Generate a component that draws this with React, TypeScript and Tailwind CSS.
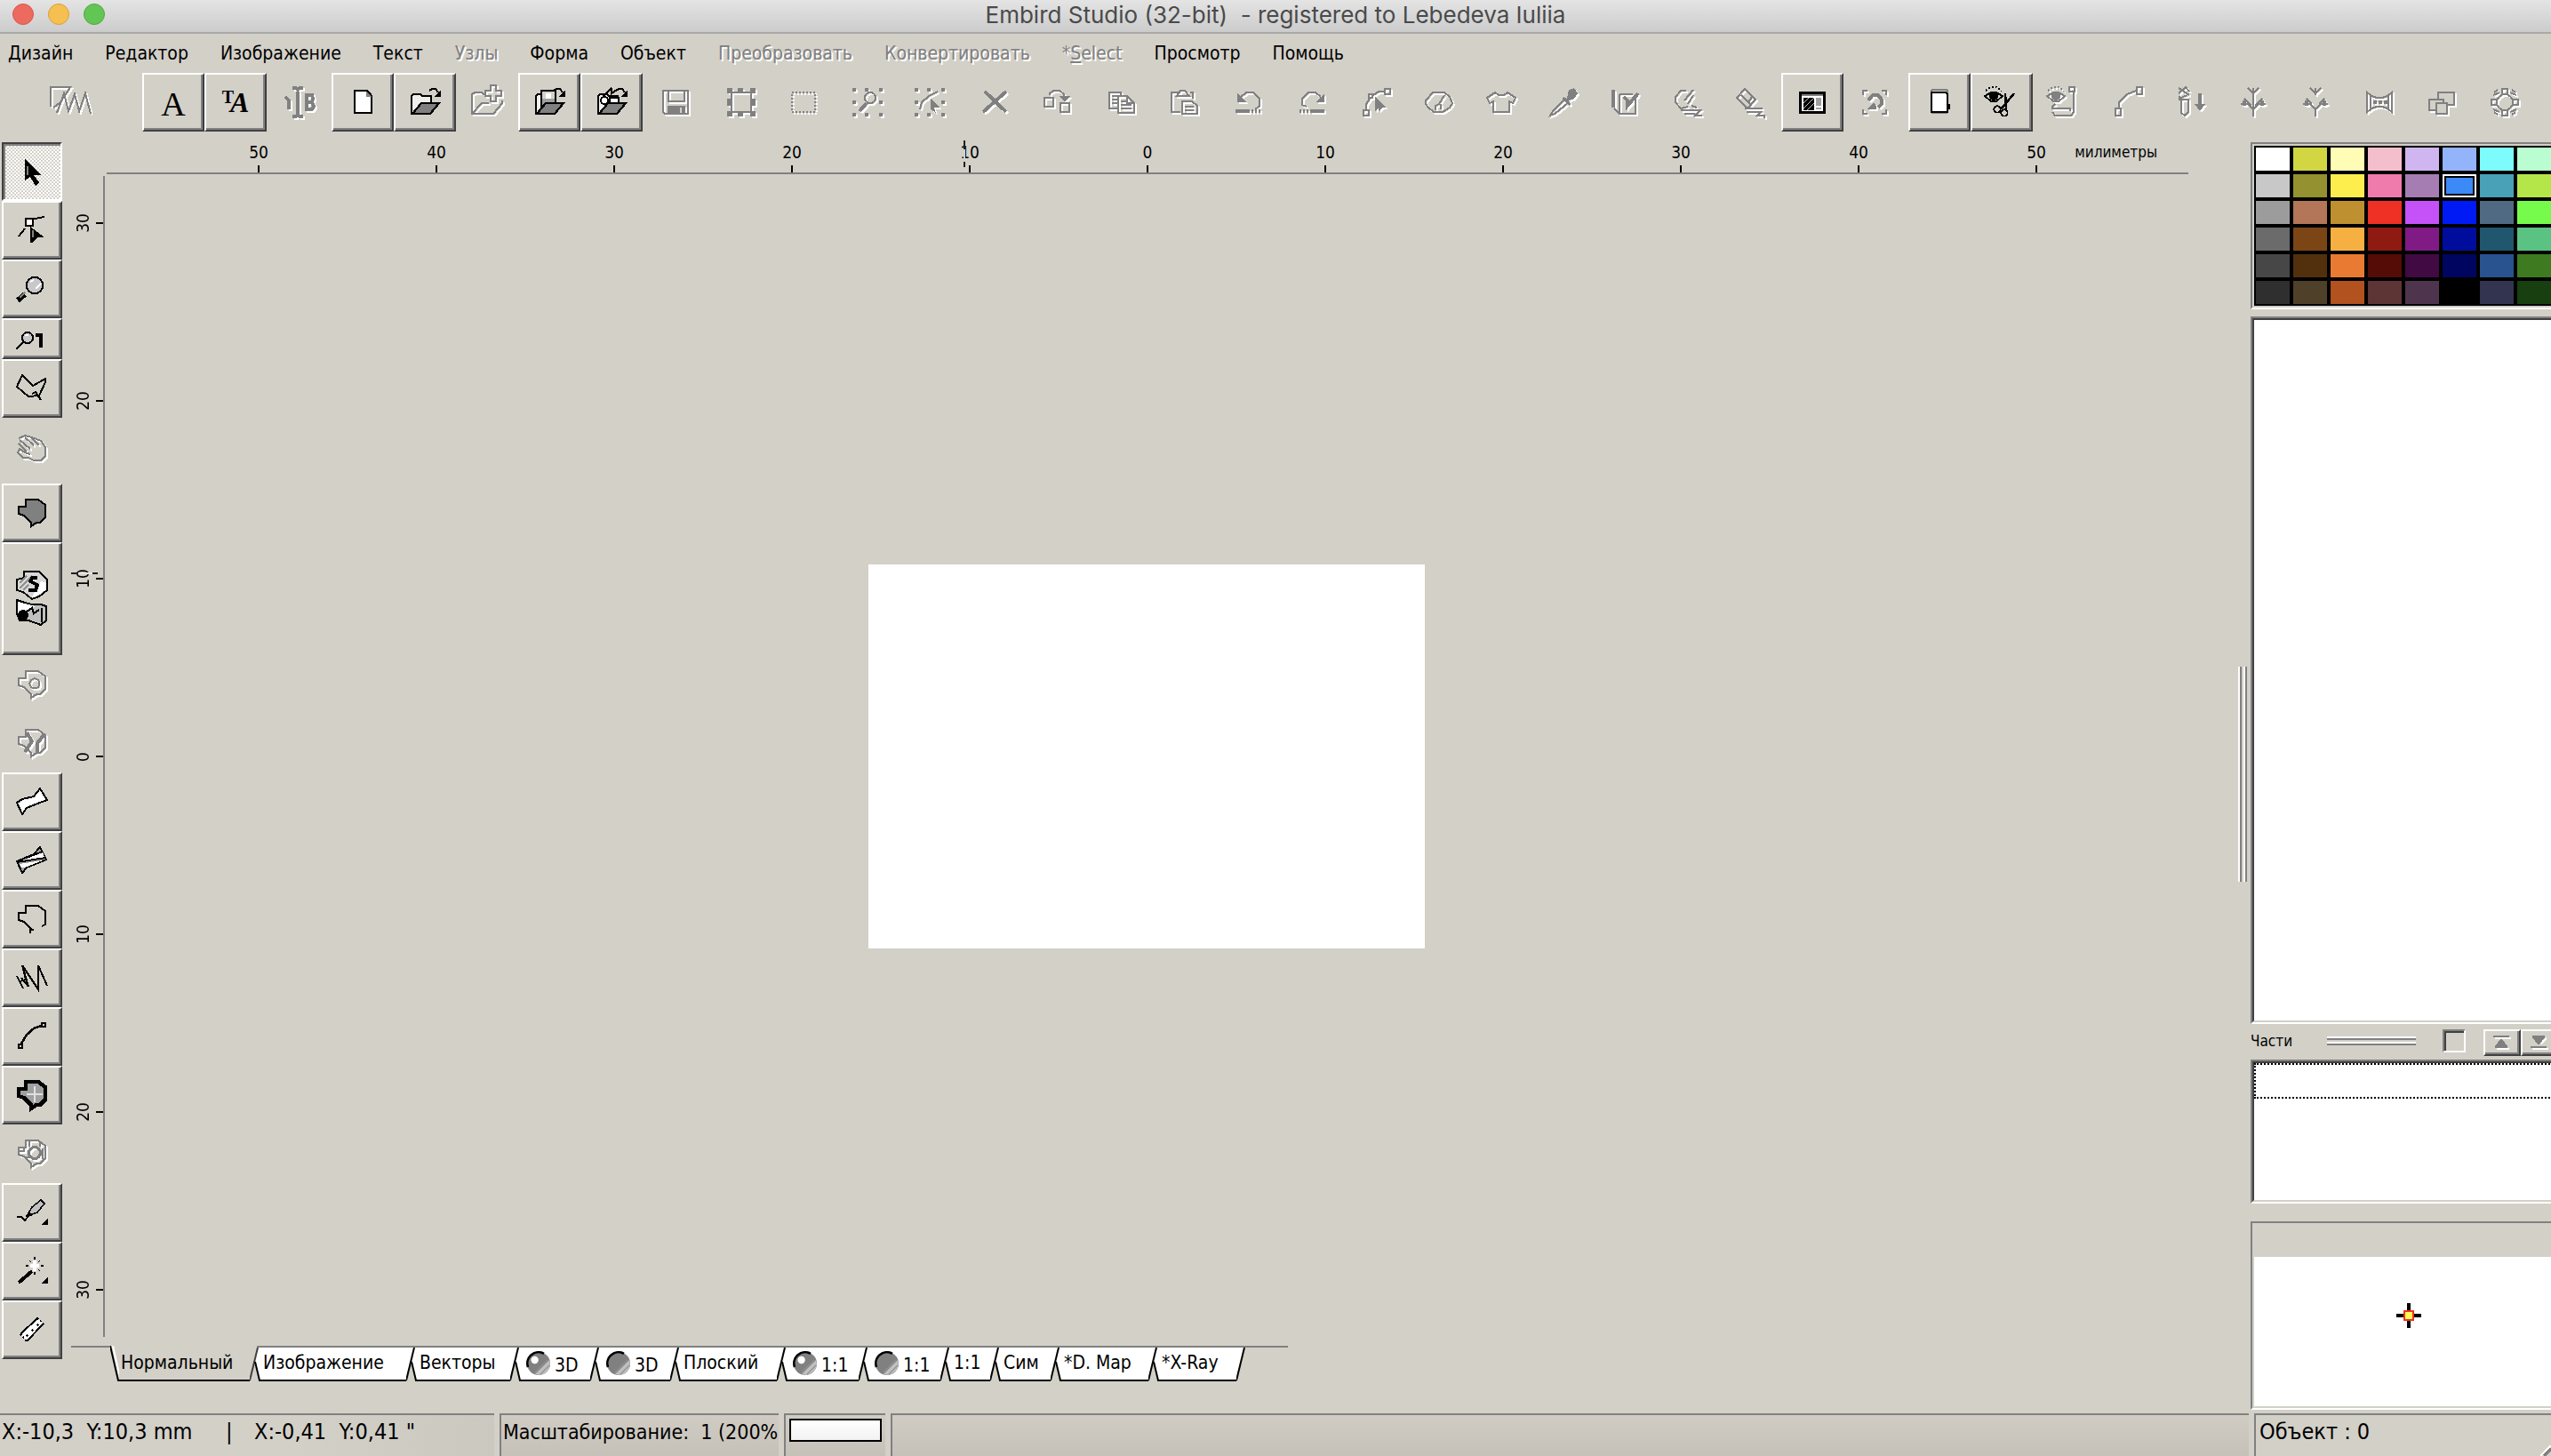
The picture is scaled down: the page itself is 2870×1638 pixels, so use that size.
import type { ReactNode } from 'react'

const RAISED =
  'border-2 border-t-white border-l-white border-b-[#404040] border-r-[#404040] shadow-[inset_-2px_-2px_0_#808080]'
const PRESSED =
  'border-2 border-t-[#404040] border-l-[#404040] border-b-white border-r-white shadow-[inset_2px_2px_0_#808080] bg-[repeating-conic-gradient(#ffffff_0_25%,#d3d0c8_0_50%)] bg-size-[4px_4px]'

const MENU = [
  { label: 'Дизайн' },
  { label: 'Редактор' },
  { label: 'Изображение' },
  { label: 'Текст' },
  { label: 'Узлы', off: true },
  { label: 'Форма' },
  { label: 'Объект' },
  { label: 'Преобразовать', off: true },
  { label: 'Конвертировать', off: true },
  { label: '*Select', off: true, mnemonic: true },
  { label: 'Просмотр' },
  { label: 'Помощь' },
]

const BLOB = 'M-3.5-7.5H3.5L7.5-4.5V2.5L4.5 5.5H2.5L-.5 7.5V5.5L-4.5 1.5L-7.5 .5V-3.5H-3.5Z'

const dots = (
  <path
    fill="currentColor"
    stroke="none"
    d="M-9-8h2v2h-2zM-2-8h2v2h-2zM6-8h2v2h-2zM-9-1h2v2h-2zM6-1h2v2h-2zM-9 6h2v2h-2zM-2 6h2v2h-2zM6 6h2v2h-2z"
  />
)

const folderBack = <path fill="#f0efec" strokeWidth="1.3" d="M-7.5 6.5V-3.5L-6.5-4.5H-2.5L-1.5-3.5H3.5V0" />

const folderFront = (
  <>
    <path fill="#808080" strokeWidth="1.2" d="M-7 6.5L-2 .5H8L3 6.5Z" />
    <path d="M2.5-6.5L4-7.5H6L7.5-5.5" />
    <path fill="currentColor" stroke="none" d="M9-7V-3H5Z" />
  </>
)

const eye = (
  <>
    <path d="M-9.5-3.5L-6-5.5H-3L.5-3.5L-3-.5H-6Z" />
    <circle cx="-4.5" cy="-3.5" r="2.6" fill="currentColor" stroke="none" />
    <path strokeDasharray="1 1" d="M-9-6.5L-6.5-8.5H-3L0-6.5" />
  </>
)

const ICONS: Record<string, ReactNode> = {
  hatch: <path d="M-11.5 2.5V-8.5H-.5L-6 0L-10 3M-8 6L-4-5L-1.5 5L2-4.5L4.5 5L8-5L11 6.5" />,
  caret: (
    <>
      <path strokeWidth="2" d="M0-6V7M-3-8H-1L0-7L1-8H3M-3 8H-1L0 7L1 8H3" />
      <path strokeWidth="2" d="M-7-3L-5-1V4M5-4V4H8L9 2.5L8 0H5H8L8.5-2L8-4Z" />
    </>
  ),
  newFile: (
    <>
      <path fill="#fff" strokeWidth="1.3" d="M-4.5-6.5H2.5L5-3.5V6H-4.5Z" />
      <path fill="#808080" stroke="none" d="M2-6V-3H5Z" />
    </>
  ),
  open: (
    <>
      {folderBack}
      {folderFront}
    </>
  ),
  addFile: (
    <>
      <path d="M-1-4.5H-2L-3-5.5H-7L-8.5-4.5V6.5H3.5L8.5 .5V-1M-8.5 6.5L-3 .5H1" />
      <path d="M2-9.5H5V-6.5H8V-3.5H5V-.5H2V-3.5H-1V-6.5H2Z" />
    </>
  ),
  openImage: (
    <>
      {folderBack}
      <path fill="#d3d0c8" d="M-4.5-6.5H3.5V2.5H-4.5Z" />
      <path fill="#a0a0a0" stroke="none" d="M-4-2H3V2H-4Z" />
      <path fill="#fff" stroke="none" d="M-2-5H1V-2H-2Z" />
      {folderFront}
    </>
  ),
  openVector: (
    <>
      {folderBack}
      <path fill="#fff" d="M-1-2.5H4V.5H-1Z" />
      <circle cx="-4" cy="-1" r="2" fill="#fff" />
      <path d="M-5-3L0-8M0-8V-5L3-7" />
      {folderFront}
    </>
  ),
  save: (
    <>
      <path d="M-7.5-6.5H6.5V6.5H-6.5L-7.5 5.5ZM-4.5-6V-.5H4.5V-6" />
      <path fill="currentColor" stroke="none" d="M-5 2H5V7H-5Z" />
      <path stroke="#d3d0c8" d="M2.5 3V6" />
    </>
  ),
  frame: (
    <>
      <path d="M-5.5-5.5H5.5V5.5H-5.5Z" />
      <path
        fill="currentColor"
        stroke="none"
        d="M-8-8h3v3h-3zM-2-8h3v2h-3zM5-8h3v3H5zM-8-2h2v4h-2zM6-2h2v4H6zM-8 5h3v3h-3zM-2 6h3v2h-3zM5 5h3v3H5z"
      />
    </>
  ),
  marquee: <path strokeDasharray="1 1" d="M-6.5-5.5H6.5V5.5H-6.5Z" />,
  findSel: (
    <>
      {dots}
      <circle cx="1" cy="-2.5" r="3" />
      <path strokeWidth="2" d="M-1 .5L-5 5" />
    </>
  ),
  nodeSel: (
    <>
      {dots}
      <path d="M-6 4L-5 0L-1-3.5L4-6" />
      <path fill="currentColor" stroke="none" d="M0-2L5 3H2L3 6L0 4Z" />
    </>
  ),
  remove: <path strokeWidth="2" d="M-6-6L6 5.5M6-6L-7 5.5" />,
  duplicate: (
    <>
      <path d="M-7.5-2.5H-2.5V2.5H-7.5ZM1.5 .5H6.5V5.5H1.5ZM-4.5-4V-5L-2.5-6.5H1L3.5-4.5V-2" />
      <path fill="currentColor" stroke="none" d="M1-3.5H7L4 0Z" />
    </>
  ),
  copy: <path d="M-1-4V-5.5H-7.5V3.5H-3M-6-3.5H-3M-6-1.5H-3M-6 .5H-3M-2.5-3.5H2.5L6.5 .5V6H-2.5ZM-1-.5H2M-1 1.5H5M-1 3.5H5M2.5-3V.5H6" />,
  paste: <path d="M-3-5.5H-7.5V5.5H-2.5M3-5.5H4.5V-2M-4.5-3.5L-2.5-6.5H0L2.5-3.5ZM-1.5-.5H4L7 2V6.5H-1.5ZM0 2.5H5M0 4.5H5" />,
  undo: (
    <>
      <path d="M-5-3L-2-5.5H2L5.5-2V2L3 4" />
      <path fill="currentColor" stroke="none" d="M-7-5V0H-2ZM-8 4H0V6H-8ZM1 4h1v2H1zM3 4h1v2H3zM5 4h1v2H5z" />
    </>
  ),
  redo: (
    <>
      <path d="M5-3L2-5.5H-2L-5.5-2V1.5L-3 2.5" />
      <path fill="currentColor" stroke="none" d="M7-5V0H2ZM7 4H-1V6H7ZM-3 4h1v2h-1zM-5 4h1v2h-1zM-7 4h1v2h-1z" />
    </>
  ),
  nodeEdit: (
    <>
      <path d="M-7.5 4.5h3v3h-3zM4.5-7.5h3v3h-3zM-4.5-4.5h2v2h-2zM-6 4V1L-4-2M-2-4L1-6H4" />
      <path fill="currentColor" stroke="none" d="M-1-3L5 3H3L1 5V3L-1 5Z" />
    </>
  ),
  gauge: <path d="M-3.5-5.5L-7.5-1V1L-6 3L-3 5.5H2L6 3L7.5 .5L6-3L3-5.5ZM-2 4.5V2L0 1L3-4M1 4V1" />,
  shirt: <path d="M-3.5-5.5L-8-2.5L-6.5 .5L-4.5-.5V5.5H4.5V-.5L6.5 .5L8-2.5L3.5-5.5L1.5-4H-1.5Z" />,
  dropper: (
    <>
      <path d="M1-2L-6 5L-7.5 7.5L-5 6.5L3 0" />
      <path fill="currentColor" stroke="none" d="M3-7L6-8L8-5L6-2L3-1L4 1L3 2L-1-2L0-3L2-2Z" />
    </>
  ),
  notebook: (
    <>
      <path d="M-3.5-4.5H4M5.5-2V6.5H-3.5L-6.5 3.5M-3.5-4.5V6.5" />
      <path strokeWidth="2" d="M-7-7V3M7-5L1 2V-1L-1-3" />
    </>
  ),
  brushStack: <path d="M-1-6.5H-4L-7-3V0L-4 3.5L0 2.5M3-7L-2-1M3-4L0 1M-4 4.5H7L4 7.5H8M-2 6.5H4M2 2L5 3" />,
  eraserStack: <path d="M-3-7.5L-7.5-2.5L-1.5 3.5L3-1.5ZM-5-4L1 2M-1 0L1-3M-3 3.5H7M-2 5.5H6L4 7.5H8V9" />,
  preview: (
    <>
      <path fill="#fff" strokeWidth="1.4" d="M-6.8-5.3H6.8V5.8H-6.8Z" />
      <path fill="#808080" stroke="none" d="M-6-4.5H6V-3.5H-6Z" />
      <path fill="#a0a0a0" stroke="none" d="M2-2.5H5V2H2ZM2 3H5V4H2Z" />
      <path fill="currentColor" stroke="none" d="M-5-2.5H1V4.5H-5Z" />
      <path stroke="#c0c0c0" strokeWidth=".7" d="M-5 .5L-2-2.5M-5 3.5L1-2.5M-3 4.5L1 .5" />
    </>
  ),
  fit: (
    <>
      <path d="M-6.5-4V-6.5H-4M4-6.5H6.5V-4M6.5 4V6.5H4M-4 6.5H-6.5V4" />
      <path strokeWidth="2" d="M-3.5-1L-1-4H2L4-1.5V1L2 3M0 1L-2 3H1" />
    </>
  ),
  hoop: (
    <>
      <rect x="-4.5" y="-7" width="9" height="13" rx="1" stroke="#808080" />
      <path fill="#fff" strokeWidth="1.4" d="M-4.5-5.5H3.5L4.5-4.5V5.5H-4.5Z" />
      <path d="M5.5 1V4" />
    </>
  ),
  eyeCut: (
    <>
      {eye}
      <path strokeWidth="1.3" d="M7-5L-.5 4M2-5L2.5 4" />
      <circle cx="-2.5" cy="4" r="1.8" />
      <circle cx="1.5" cy="6" r="1.8" />
    </>
  ),
  eyeHand: (
    <>
      {eye}
      <path d="M3-8.5H6V-6H3ZM5.5-6V5.5L4 7.5H-5L-6.5 5.5M-7 3.5H3.5V5M-5 1L-7 3" />
    </>
  ),
  curve: <path d="M-7.5 3.5h3v4h-3zM4.5-8.5h3v4h-3zM-5.5 3V0L-1-4.5L4-6.5" />,
  lower: (
    <>
      <path d="M-7-8L-1-4M-7-5L-3-8.5L-1-6M-7-2L-2-4M-5.5-1.5V6L-3.5 7.5L-1.5 5.5V-2M-6.5-3.5V-1.5H-1" />
      <path fill="currentColor" stroke="none" d="M4-5H6V1H8L5 5L2 1H4Z" />
    </>
  ),
  leaf: (
    <>
      <path d="M0-8V8M-3-8L0-5L3-8M-7 1H-3L0 4L3 1H7M-5-2L-1 2M5-2L1 2" />
      <path strokeWidth="2" d="M-5-1V2M5-1V2" />
    </>
  ),
  leafOpen: (
    <>
      <path d="M0-8V-4M0 4V8M-3-8L0-5L3-8M-7 1H-3L0 4L3 1H7M-5-2L-2 1M5-2L2 1" />
      <path strokeWidth="2" d="M-5-1V2M5-1V2" />
    </>
  ),
  bow: (
    <>
      <path d="M-7.5-5.5L-5.5-4V4L-7.5 5.5ZM6.5-5.5L4.5-4V4L6.5 5.5ZM-5-3.5L-2-2.5H1L4-3.5M-5 3.5L-2 2.5H1L4 3.5" />
      <path strokeWidth="2" strokeDasharray="2 1" d="M-4 0H4" />
    </>
  ),
  stack: (
    <>
      <path fill="#d3d0c8" d="M-2.5-5.5H6.5V1.5H-2.5Z" />
      <path fill="#d3d0c8" d="M-7.5-1.5H.5V4.5H-7.5Z" />
      <path fill="#d3d0c8" d="M-3.5 .5H2.5V6.5H-3.5Z" />
    </>
  ),
  wreath: (
    <>
      <circle r="4.5" />
      <path d="M-1.5-7.5h3v3h-3zM-1.5 4.5h3v3h-3zM-7.5-1.5h3v3h-3zM4.5-1.5h3v3h-3zM-6-5.5L-4-7M-6.5-4L-3-5.5M6-5.5L4-7M6.5-4L3-5.5M-6 5.5L-4 7M-6.5 4L-3 5.5M6 5.5L4 7M6.5 4L3 5.5" />
    </>
  ),
  pointer: (
    <>
      <path fill="currentColor" stroke="none" d="M-4-7L5 2H1L4 6L2 8L-1 3L-4 5Z" />
      <path stroke="#808080" d="M-2.5-3V2" />
    </>
  ),
  node: (
    <>
      <path d="M-7.5 3.5L-4-1M-4-5.5L7-7.5" />
      <path fill="#fff" d="M-3.5-6.5h4v4h-4z" />
      <path fill="currentColor" stroke="none" d="M-1-2L7 4H3L0 7H-1Z" />
      <path stroke="#808080" d="M.5 0V4" />
    </>
  ),
  zoom: (
    <>
      <path strokeWidth="3" d="M-4 3L-8 6.5" />
      <path stroke="#808080" d="M-4 2L-7 5" />
      <circle cx="1.5" cy="-2" r="4.6" fill="#c8c8c8" />
      <path stroke="#fff" d="M-1-4L1-5M2 0L5-3" />
    </>
  ),
  zoomOne: (
    <>
      <path strokeWidth="1.3" d="M-5 2L-9 6" />
      <circle cx="-2.5" cy="-.5" r="3" fill="#c8c8c8" />
      <path stroke="#fff" d="M-4-2H-2" />
      <path fill="currentColor" stroke="none" d="M2-3H6V5H4V-1H2Z" />
    </>
  ),
  lasso: <path d="M-5.5-7.5L-8.5-1L-2 4.5L4 4L7.5-3.5V-5.5L.5-1.5ZM0 3L2 2L5 6.5" />,
  hand: <path d="M-7.5-7L-4-8.5L0-7.5L5-5.5L7.5-2V3L5 5.5H1L-2 4H-5L-8 1L-7-1L-4 1L-1 2M-4-7.5L1-3M-7-6L-1-1M-7.5-4L-3 .5M0-7L4-3" />,
  fill: <path fill="#808080" d={BLOB} />,
  hole: (
    <>
      <path d={BLOB} />
      <circle cx="1.5" cy="-.5" r="2.8" />
    </>
  ),
  split: (
    <>
      <path d={BLOB} />
      <path strokeWidth="2" d="M-3-6L0-1L-4 5M7-5L3 0V6" />
    </>
  ),
  column: <path fill="#fff" d="M-8.5 .5L-5.5-1.5L1-3L4.5-7.5L8.5-1L3 1L-3 3.5L-5.5 7Z" />,
  columns: (
    <>
      <path fill="#a0a0a0" d="M-8.5 .5L1-3.5L4.5-7.5L8-.5L-3 4L-5.5 7Z" />
      <path fill="#fff" stroke="none" d="M-7 0L6-4.5L7-2L-1 0ZM-7 2L6 0L-4 4H-6Z" />
      <path d="M-8.5 1L7.5-1.5M-8.5 .5L6-5" />
    </>
  ),
  outline: <path d="M-1 8V6H1M0 6L-4.5 1.5L-7.5 .5V-3.5H-3.5V-7.5H3.5L7.5-4.5V3L5.5 4" />,
  zigzag: <path d="M-8.5-1L-5 6L-7 2L-3.5 1L-5.5-7L3.5 6.5V-7L8.5 4.5M-5.5-7L-2 5L-6 0" />,
  arc: <path strokeWidth="1.3" d="M-7.5 4.5h2v2h-2zM5.5-7.5h2v2h-2zM-6 4L-3-1L1-4.5L5-6" />,
  fillThick: (
    <>
      <path fill="#a0a0a0" strokeWidth="2.2" d={BLOB} />
      <path stroke="#e0e0e0" d="M-3-.5H6M1.5-5V4" />
    </>
  ),
  ringHole: (
    <>
      <path d={BLOB} />
      <circle cx="1.5" cy="-.5" r="3.2" strokeWidth="1.6" />
      <path d="M-4.5-4V-1.5H-7M-1.5-7V-4M4.5-7V-4M-4 2H0M6-3V3" />
    </>
  ),
  pen: (
    <>
      <path d="M-8.5 2.5H-6L-4 4.5L-2 2" />
      <path fill="#c0c0c0" strokeWidth=".8" d="M-3 2L0-3L5-7L7-5L3 0Z" />
      <path fill="currentColor" stroke="none" d="M-3 3L-1.5 0L.5 1.5ZM9 3V7H5Z" />
    </>
  ),
  wand: (
    <>
      <path strokeWidth="2" d="M-7.5 6.5L0 0" />
      <path stroke="#fff" strokeWidth="2" d="M1.5-6V0M-1-3H4" />
      <path strokeWidth=".6" d="M1.5-8V-6.5M1.5 .5V2M-3.5-3H-2M5-3H6.5M-1.5-6L-.5-5M3.5-1L4.5 0M3.5-5L4.5-6" />
      <path fill="currentColor" stroke="none" d="M9 3V7H5Z" />
    </>
  ),
  ruler: (
    <>
      <path fill="#fff" stroke="none" d="M-6.5 2.5L3-6.5L6.5-3.5L-3 6.5Z" />
      <path d="M-6.5 2.5L3-6.5M6.5-3.5L-3 6.5" />
      <path strokeDasharray="1 1" d="M3-6.5L6.5-3.5M-6.5 2.5L-3 6.5M-3 3L-1 5M0 0L2 2M3-3L5-1" />
    </>
  ),
}

/** 24-unit icon on a doubled pixel grid; disabled ones get the engraved look. */
function Glyph({ name, off }: { name: string; off?: boolean }) {
  return (
    <svg viewBox="-12 -12 24 24" className="h-12 w-12 shrink-0" fill="none" stroke="currentColor" shapeRendering="crispEdges" aria-hidden="true">
      {off && (
        <g className="text-white" transform="translate(1 1)">
          {ICONS[name]}
        </g>
      )}
      <g className={off ? 'text-[#808080]' : 'text-black'}>{ICONS[name]}</g>
    </svg>
  )
}

// a leading "-" marks a disabled tool
const TOOL_GROUPS = [
  ['text', 'lettering', '-caret'],
  ['newFile', 'open', '-addFile', 'openImage', 'openVector'],
  ['-save'],
  ['-frame', '-marquee'],
  ['-findSel', '-nodeSel'],
  ['-remove', '-duplicate'],
  ['-copy', '-paste'],
  ['-undo', '-redo'],
  ['-nodeEdit', '-gauge', '-shirt', '-dropper', '-notebook', '-brushStack', '-eraserStack', 'preview', '-fit'],
  ['hoop', 'eyeCut', '-eyeHand'],
  ['-curve', '-lower', '-leaf', '-leafOpen'],
  ['-bow', '-stack', '-wreath'],
]

function Tool({ id }: { id: string }) {
  const off = id.startsWith('-')
  const name = off ? id.slice(1) : id
  return (
    <button
      type="button"
      disabled={off}
      aria-label={name}
      className={`flex h-[66px] w-[70px] shrink-0 items-center justify-center ${off ? '' : RAISED}`}
    >
      {name === 'text' && <span className="pt-1 font-['Liberation_Serif',serif] text-[38px] leading-none">A</span>}
      {name === 'lettering' && (
        <span className="flex items-start font-['Liberation_Serif',serif] font-bold leading-none">
          <span className="text-[20px]">T</span>
          <span className="-ml-1 text-[32px] italic">A</span>
        </span>
      )}
      {name in ICONS && <Glyph name={name} off={off} />}
    </button>
  )
}

function SideTool({ id }: { id: string }) {
  const off = id.startsWith('-')
  const name = off ? id.slice(1) : id
  const height = name === 'zoomOne' ? 'h-[46px]' : name === 'hand' ? 'h-[74px]' : 'h-[66px]'
  const face = off ? '' : name === 'pointer' ? PRESSED : RAISED
  return (
    <button type="button" disabled={off} aria-label={name} className={`flex w-full shrink-0 items-center justify-center overflow-hidden ${height} ${face}`}>
      <Glyph name={name} off={off} />
    </button>
  )
}

function GenerateTool() {
  return (
    <button type="button" aria-label="stitches" className={`flex h-[127px] w-full shrink-0 items-center justify-center ${RAISED}`}>
      <svg viewBox="-12 -16 24 32" className="h-16 w-12" fill="none" stroke="#000" shapeRendering="crispEdges" aria-hidden="true">
        <path fill="#d8d8d8" d="M-4.5-15.5H4L8.5-11V-5L4-1.5L0 0L-5-4L-8.5-5V-11L-4.5-12Z" />
        <path fill="#fff" stroke="none" d="M5-10L8-9V-5L3-2L0-1Z" />
        <path stroke="#909090" d="M-7-9L-3-13M-7-6L0-13M-5-5L-2-8" />
        <path strokeWidth="2" d="M3-12H0L-1-10L3-8L2-5H-2" />
        <path fill="#c0c0c0" d="M-8.5 .5L-4 2L0 3H5L8 4V12L5 14.5L-2 12H-7L-8.5 8Z" />
        <path fill="#fff" stroke="none" d="M-8 1.5L-4 2.5L2 4L-4 7L-8 8Z" />
        <circle cx="-5" cy="9" r="2.5" fill="#000" />
        <path d="M-3 7L0 5L1 8L4 6M5.5 5V13" />
      </svg>
    </button>
  )
}

const H_MARKS = [50, 40, 30, 20, 10, 0, 10, 20, 30, 40, 50]
const V_MARKS = [30, 20, 10, 0, 10, 20, 30]

const TABS = [
  { label: 'Изображение', width: 'w-[164px]' },
  { label: 'Векторы', width: 'w-[105px]' },
  { label: '3D', width: 'w-[78px]', ball: 'shiny' },
  { label: '3D', width: 'w-[78px]', ball: 'dull' },
  { label: 'Плоский', width: 'w-[108px]' },
  { label: '1:1', width: 'w-[80px]', ball: 'shiny' },
  { label: '1:1', width: 'w-[80px]', ball: 'dull' },
  { label: '1:1', width: 'w-[44px]' },
  { label: 'Сим', width: 'w-[56px]' },
  { label: '*D. Map', width: 'w-[98px]' },
  { label: '*X-Ray', width: 'w-[87px]' },
]

function Ball({ shiny }: { shiny: boolean }) {
  return (
    <svg viewBox="0 0 14 14" className="h-7 w-7 shrink-0" aria-hidden="true">
      <circle cx="7" cy="7" r="6.5" fill="#808080" />
      <path d="M13 5A6.3 6.3 0 0 1 5 13Z" fill="#c0c0c0" />
      <path d="M1 9A6.3 6.3 0 0 1 10 1.4" fill="none" stroke="#000" strokeWidth="1.3" />
      <path d="M5 12L12 5M8 13L13 8" stroke="#909090" strokeWidth=".6" />
      {shiny && <circle cx="4.8" cy="5" r="2.1" fill="#fff" />}
    </svg>
  )
}

/** Slanted joint between two neighbouring tabs. */
function Joint({ first, last }: { first?: boolean; last?: boolean }) {
  return (
    <svg viewBox="0 0 12 40" className="h-10 w-3 shrink-0" aria-hidden="true">
      {!last && <path fill="#fff" d="M9 0L5 18L11 39H12V0Z" />}
      {!first && <path fill="#fff" d="M0 0H9L0 39Z" />}
      <path fill="none" stroke={first ? '#404040' : '#000'} strokeWidth="2" d="M9 2L0 39" />
      {!last && <path fill="none" stroke="#000" strokeWidth="2" d="M6 18L11 39H12" />}
      <path fill="#808080" d={first ? 'M8 0H12V2H8Z' : 'M0 0H12V2H0Z'} />
    </svg>
  )
}

function ViewTabs() {
  return (
    <div className="ml-[10px] flex h-10 shrink-0 text-[21px] leading-[26px]" role="tablist">
      <div className="w-[44px] border-t-2 border-[#808080]" />
      <svg viewBox="0 0 10 40" className="h-10 w-[10px] shrink-0" aria-hidden="true">
        <path fill="none" stroke="#fff" strokeWidth="2" d="M3 0L11 36" />
        <path fill="none" stroke="#000" strokeWidth="2" d="M0 0L9 39H10" />
      </svg>
      <button type="button" role="tab" aria-selected="true" className="w-[147px] border-b-2 border-black pl-[2px] text-left whitespace-nowrap">
        Нормальный
      </button>
      <Joint first />
      {TABS.map((tab, i) => (
        <div key={i} className="flex shrink-0">
          <button
            type="button"
            role="tab"
            aria-selected="false"
            className={`flex items-center border-t-2 border-b-2 border-t-[#808080] border-b-black bg-white whitespace-nowrap ${tab.width} ${tab.ball ? 'gap-1 pl-[6px]' : 'pb-[2px] pl-[3px]'}`}
          >
            {tab.ball && <Ball shiny={tab.ball === 'shiny'} />}
            <span className={tab.ball ? 'pt-1' : ''}>{tab.label}</span>
          </button>
          <Joint last={i === TABS.length - 1} />
        </div>
      ))}
      <div className="w-[46px] border-t-2 border-[#808080]" />
    </div>
  )
}

function Workspace() {
  return (
    <div className="flex min-w-0 flex-1 flex-col">
      <div className="relative mr-[56px] mb-[2px] ml-[50px] flex h-[48px] shrink-0 justify-center border-b-2 border-[#808080]">
        {H_MARKS.map((mark, i) => (
          <div key={i} className="flex w-[200px] shrink-0 flex-col items-center justify-end text-[19px] leading-[22px]">
            <span>{mark}</span>
            <span className="mt-1 h-2 w-[2px] bg-black" />
          </div>
        ))}
        <span className="absolute top-[10px] right-[35px] text-[17px] leading-[26px]">милиметры</span>
        <span className="absolute top-[10px] left-[calc(50%-207px)] flex w-[2px] flex-col">
          <span className="h-[10px] bg-[#202020]" />
          <span className="h-[14px] bg-[#d3d0c8]" />
          <span className="h-[6px] bg-[#202020]" />
        </span>
      </div>
      <div className="flex min-h-0 flex-1">
        <div className="relative flex w-[48px] shrink-0 flex-col justify-center border-r-2 border-[#808080]">
          {V_MARKS.map((mark, i) => (
            <div key={i} className="flex h-[200px] shrink-0 items-center justify-end text-[19px] leading-[22px]">
              <span className="rotate-180 [writing-mode:vertical-rl]">{mark}</span>
              <span className="ml-1 h-[2px] w-2 bg-black" />
            </div>
          ))}
          <span className="absolute top-[calc(50%-207px)] left-[10px] flex h-[2px]">
            <span className="w-2 bg-[#202020]" />
            <span className="w-4 bg-[#e8e6e2]" />
            <span className="w-[6px] bg-[#202020]" />
          </span>
        </div>
        <div className="mr-[56px] flex flex-1 items-center justify-center">
          <div className="h-[432px] w-[626px] bg-white" />
        </div>
      </div>
      <div className="mt-[10px] mb-[36px]">
        <ViewTabs />
      </div>
    </div>
  )
}

const PALETTE = [
  ['#ffffff', '#d1d642', '#fffdb5', '#f4bfcd', '#d0b6f0', '#93b3fb', '#7dfbfd', '#b9fdd0'],
  ['#c8c8c8', '#949130', '#fdee4e', '#ef7bad', '#a67db3', '#3b8af7', '#48a1b6', '#b4e549'],
  ['#9c9c9c', '#b37659', '#bf9030', '#ee3124', '#c551f9', '#001af5', '#516a83', '#76fb4c'],
  ['#6b6b6b', '#7c4516', '#f5b041', '#8f1a11', '#801b86', '#000d9c', '#21566f', '#5ac283'],
  ['#474747', '#52300d', '#e87b31', '#560c06', '#410a42', '#000560', '#28538e', '#3e7a20'],
  ['#2f2f2f', '#4f4029', '#b1521f', '#5e3535', '#4e354d', '#000000', '#333450', '#183f10'],
]

function SidePanel() {
  return (
    <div className="ml-1 flex w-[338px] shrink-0 flex-col overflow-hidden pt-3">
      <div className="w-[344px] border-2 border-t-[#808080] border-l-[#808080] border-b-white p-[2px]">
        <div className="grid w-[336px] grid-cols-8">
          {PALETTE.flat().map((color, i) => (
            <button
              key={i}
              type="button"
              aria-label={color}
              className="h-[30px] border-2 border-black"
              style={{ backgroundColor: color }}
            >
              {color === '#3b8af7' && (
                <span className="block h-full border-2 border-white">
                  <span className="block h-full border-2 border-black" />
                </span>
              )}
            </button>
          ))}
        </div>
      </div>
      <div className="mt-2 min-h-0 w-[344px] flex-1 border-2 border-t-[#808080] border-l-[#808080] border-b-white">
        <div className="h-full border-2 border-t-[#404040] border-l-[#404040] border-b-[#d3d0c8] bg-white" />
      </div>
      <div className="flex h-[40px] shrink-0 items-start pt-[6px] text-[17px] leading-[26px]">
        <label htmlFor="parts" className="w-[86px] shrink-0">
          Части
        </label>
        <div className="mt-2 flex w-[100px] shrink-0 flex-col gap-[2px]">
          <div className="h-1 border-b-2 border-[#808080] bg-white" />
          <div className="h-1 border-b-2 border-[#808080] bg-white" />
        </div>
        <input
          id="parts"
          type="checkbox"
          className="ml-[30px] h-[26px] w-[26px] shrink-0 appearance-none border-2 border-t-[#808080] border-r-white border-b-white border-l-[#808080] shadow-[inset_2px_2px_0_#404040]"
        />
        <button type="button" aria-label="up" disabled className={`ml-[20px] flex h-[30px] w-[42px] shrink-0 items-center justify-center ${RAISED}`}>
          <svg viewBox="0 0 10 8" className="h-4 w-5" shapeRendering="crispEdges">
            <path fill="#fff" d="M1 1H10V2H1ZM2 7H9V8H2Z" />
            <path fill="#808080" d="M0 0H9V1H0ZM4 2H5L8 6V7H1V6Z" />
          </svg>
        </button>
        <button type="button" aria-label="down" disabled className={`flex h-[30px] w-[42px] shrink-0 items-center justify-center ${RAISED}`}>
          <svg viewBox="0 0 10 8" className="h-4 w-5" shapeRendering="crispEdges">
            <path fill="#fff" d="M1 7H10V8H1ZM9 1V2L6 5L5 4Z" />
            <path fill="#808080" d="M0 6H9V7H0ZM1 0H8V1L5 5H4L1 1Z" />
          </svg>
        </button>
      </div>
      <div className="h-[162px] w-[344px] shrink-0 border-2 border-t-[#808080] border-l-[#808080] border-b-white">
        <div className="h-full border-2 border-t-[#404040] border-l-[#404040] border-b-[#d3d0c8] bg-white">
          <div className="h-[40px] border-2 border-dotted border-black" />
        </div>
      </div>
      <div className="mt-5 mb-1 flex h-[212px] w-[344px] shrink-0 flex-col border-2 border-t-[#808080] border-l-[#808080] border-b-white px-[2px] pb-[2px]">
        <div className="h-[38px]" />
        <div className="flex flex-1 justify-center bg-white pt-[52px]">
          <svg viewBox="0 0 14 14" className="mr-[-12px] h-7 w-7" shapeRendering="crispEdges">
            <path fill="#000" d="M6 0H8V14H6ZM0 6H14V8H0Z" />
            <path fill="#ee3124" d="M4 4H10V10H4Z" />
            <path fill="#fffd54" d="M5 5H9V9H5Z" />
          </svg>
        </div>
      </div>
    </div>
  )
}

const SIDE_TOP = ['pointer', 'node', 'zoom', 'zoomOne', 'lasso', '-hand', 'fill']
const SIDE_BOTTOM = ['-hole', '-split', 'column', 'columns', 'outline', 'zigzag', 'arc', 'fillThick', '-ringHole', 'pen', 'wand', 'ruler']

export default function App() {
  return (
    <div className="flex h-screen flex-col overflow-hidden bg-[#d3d0c8] font-['DejaVu_Sans_Condensed','DejaVu_Sans',sans-serif] text-black">
      <header className="flex h-[38px] shrink-0 items-center border-b-2 border-[#a8a8a8] bg-linear-to-b from-[#e4e4e4] to-[#cccccc] px-[14px]">
        <div className="flex flex-1 gap-4 pb-1">
          <button type="button" aria-label="close" className="h-6 w-6 rounded-full border border-[#d9574e] bg-[#ed6a5f]" />
          <button type="button" aria-label="minimize" className="h-6 w-6 rounded-full border border-[#d8a03d] bg-[#f6c050]" />
          <button type="button" aria-label="zoom" className="h-6 w-6 rounded-full border border-[#51a73e] bg-[#62c655]" />
        </div>
        <h1 className="pb-[2px] font-['Inter',sans-serif] text-[26px] leading-[34px] whitespace-pre text-[#4a4a4a]">
          {'Embird Studio (32-bit)  - registered to Lebedeva Iuliia'}
        </h1>
        <div className="flex-1" />
      </header>

      <nav className="flex h-[44px] shrink-0 items-center gap-9 pl-[9px] text-[21px] leading-[28px]">
        {MENU.map((item) => (
          <button
            key={item.label}
            type="button"
            disabled={item.off}
            className={`whitespace-nowrap ${item.off ? 'text-[#808080] [text-shadow:2px_2px_0_#fff]' : ''}`}
          >
            {item.mnemonic ? (
              <>
                *<u>S</u>elect
              </>
            ) : (
              item.label
            )}
          </button>
        ))}
      </nav>

      <div className="flex shrink-0 pl-[45px]">
        <Tool id="-hatch" />
        <div className="ml-[45px] flex gap-[3px]">
          {TOOL_GROUPS.map((group, i) => (
            <div key={i} className="flex">
              {group.map((id) => (
                <Tool key={id} id={id} />
              ))}
            </div>
          ))}
        </div>
      </div>

      <main className="flex min-h-0 flex-1">
        <div className="flex w-[70px] shrink-0 flex-col pt-3 pl-[2px]">
          {SIDE_TOP.map((id) => (
            <SideTool key={id} id={id} />
          ))}
          <GenerateTool />
          {SIDE_BOTTOM.map((id) => (
            <SideTool key={id} id={id} />
          ))}
        </div>
        <Workspace />
        <div className="mt-1 flex h-[242px] w-[10px] shrink-0 gap-[2px] self-center">
          <div className="w-1 border-r-2 border-[#808080] bg-white" />
          <div className="w-1 border-r-2 border-[#808080] bg-white" />
        </div>
        <SidePanel />
      </main>

      <footer className="flex h-[48px] shrink-0 gap-[6px] overflow-hidden leading-[38px] whitespace-pre">
        <div className="flex w-[556px] shrink-0 border-t-2 border-[#808080] bg-linear-to-r from-[#d3d0c8] from-60% to-[#cbc8bf] pl-[2px] text-[25px]">
          <span className="w-[252px]">{'X:-10,3  Y:10,3 mm'}</span>
          <span className="w-[32px]">|</span>
          <span>{'X:-0,41  Y:0,41 "'}</span>
        </div>
        <div className="w-[314px] shrink-0 border-t-2 border-l-2 border-[#808080] bg-linear-to-b from-[#d0ccc4] to-[#c5c1b8] pl-[2px] text-[23px]">
          {'Масштабирование:  1 (200%'}
        </div>
        <div className="w-[114px] shrink-0 border-t-2 border-l-2 border-[#808080] bg-linear-to-b from-[#d0ccc4] to-[#c5c1b8] pt-1 pl-1">
          <div className="h-[26px] w-[104px] border-2 border-black bg-linear-to-b from-white to-[#f2f2f2]" />
        </div>
        <div className="flex-1 border-t-2 border-l-2 border-[#808080] bg-linear-to-b from-[#d0ccc4] to-[#c5c1b8]" />
        <div className="flex w-[334px] shrink-0 border-t-2 border-l-2 border-[#808080] pl-1 text-[25px]">
          <span className="flex-1">Объект : 0</span>
          <svg viewBox="0 0 6 6" className="h-3 w-3 self-end" shapeRendering="crispEdges" aria-hidden="true">
            <path stroke="#fff" d="M0 6L6 0" />
            <path stroke="#808080" strokeWidth="2" d="M2 6L6 2" />
          </svg>
        </div>
      </footer>
    </div>
  )
}
